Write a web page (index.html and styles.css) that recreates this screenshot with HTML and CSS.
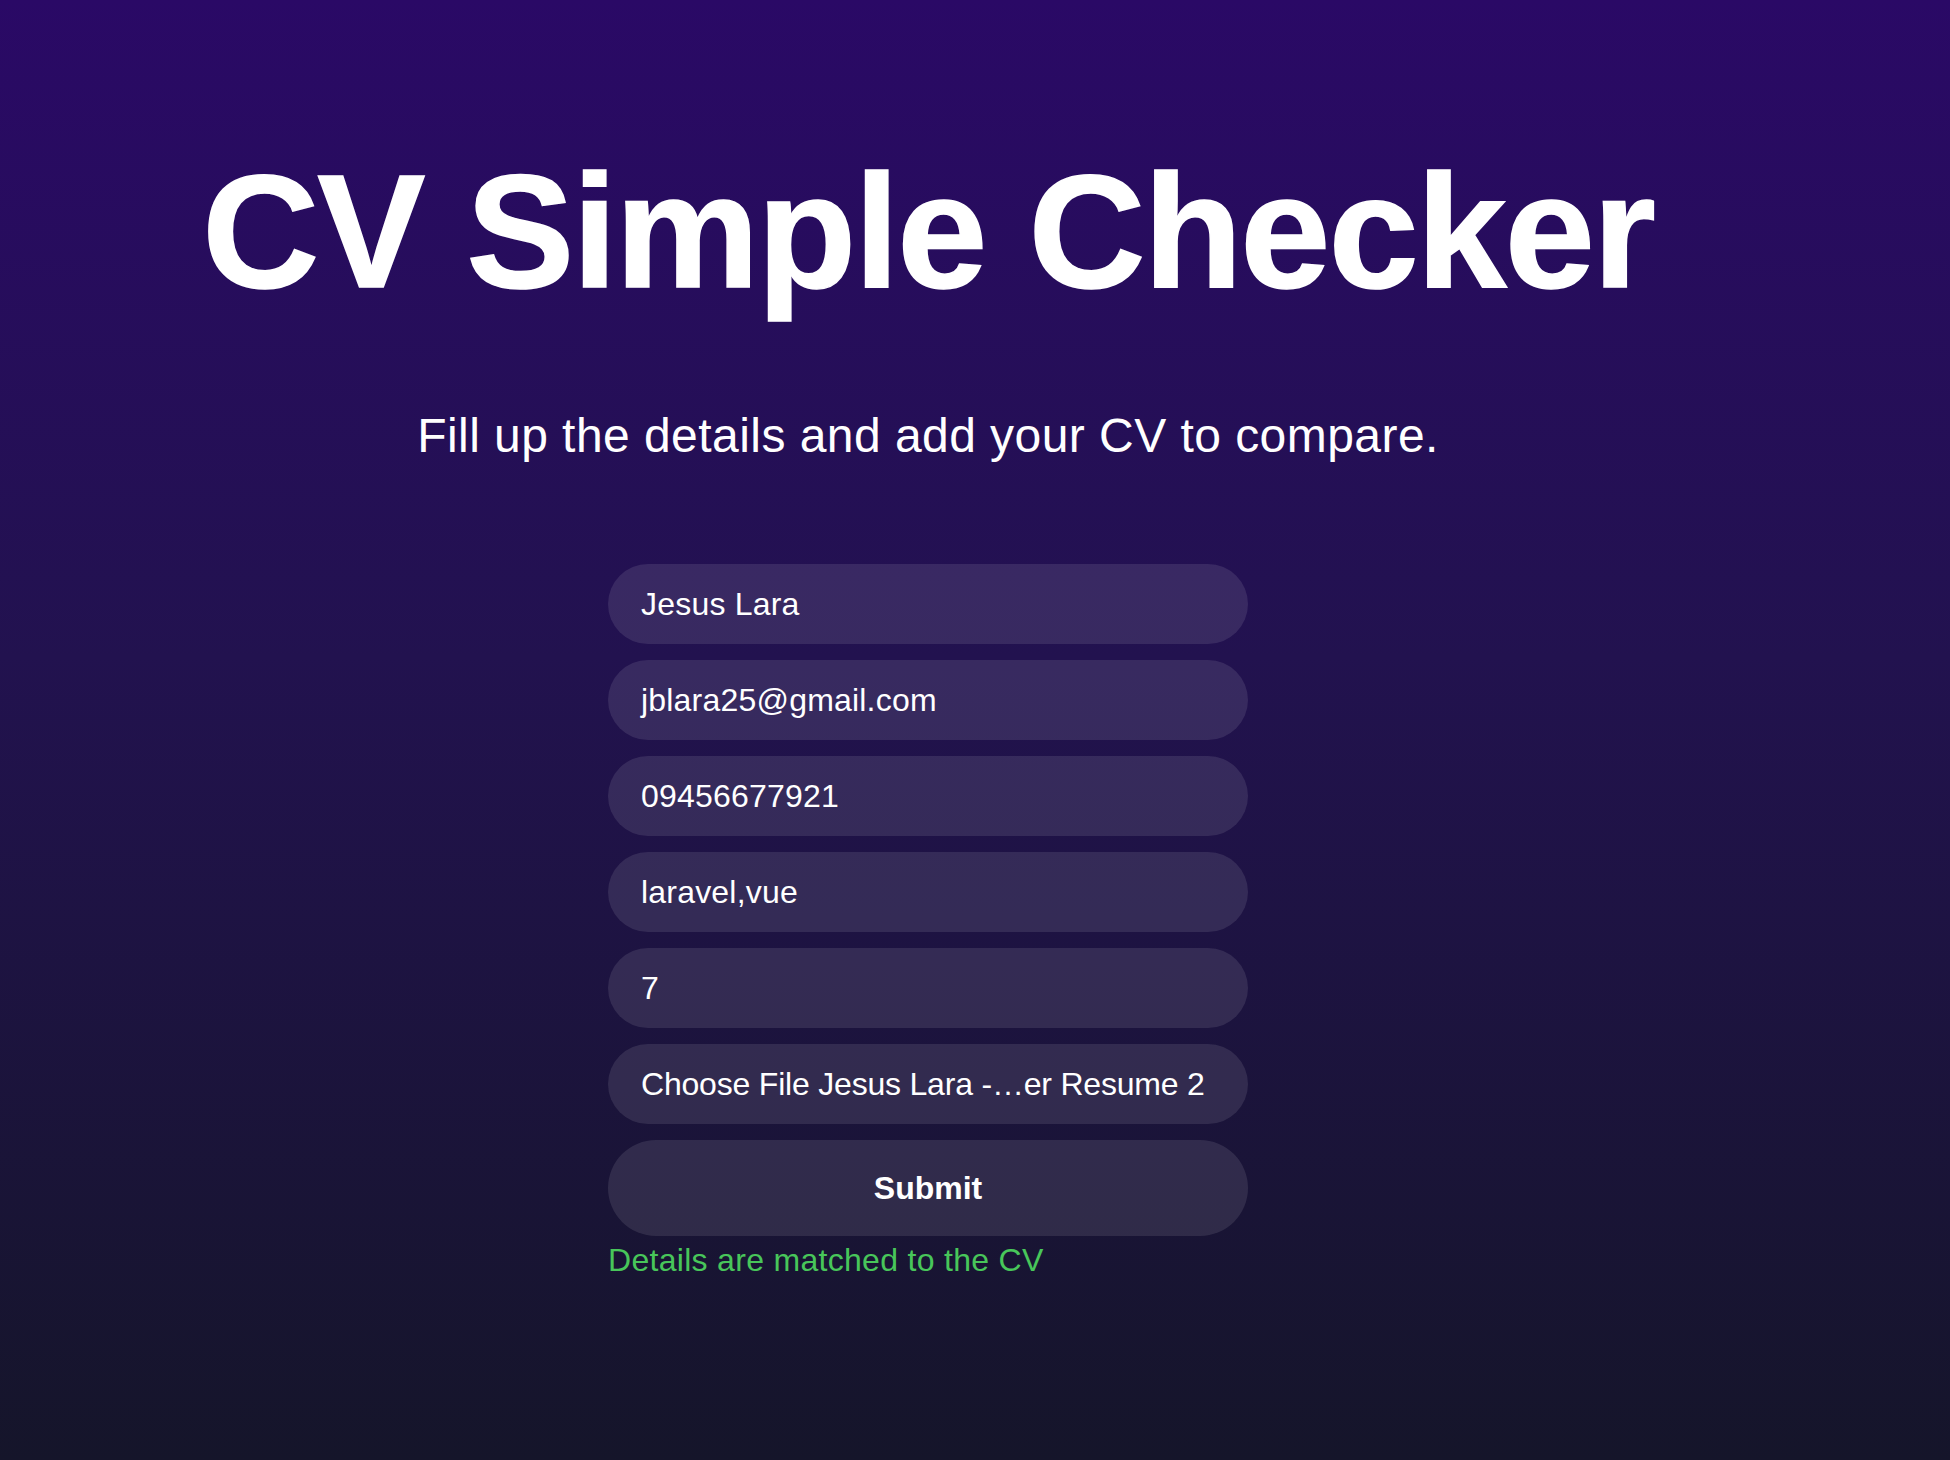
FILE: index.html
```html
<!DOCTYPE html>
<html lang="en">
<head>
<meta charset="utf-8">
<title>CV Simple Checker</title>
<link rel="stylesheet" href="styles.css">
</head>
<body>
<main class="page">
  <h1 class="title">CV Simple Checker</h1>
  <p class="subtitle">Fill up the details and add your CV to compare.</p>
  <form class="form">
    <div class="field">Jesus Lara</div>
    <div class="field">jblara25@gmail.com</div>
    <div class="field">09456677921</div>
    <div class="field">laravel,vue</div>
    <div class="field">7</div>
    <div class="field field-file">Choose File Jesus Lara -…er Resume 2</div>
    <button type="button" class="submit">Submit</button>
    <p class="message">Details are matched to the CV</p>
  </form>
</main>
</body>
</html>
```
FILE: styles.css
```css
html, body {
  margin: 0;
  padding: 0;
}
body {
  min-height: 1460px;
  background: linear-gradient(180deg, #2a0966 0%, #22124f 45%, #15152a 100%);
  font-family: "Liberation Sans", Arial, sans-serif;
  color: #ffffff;
}
.page {
  width: 1856px;
  display: flex;
  flex-direction: column;
  align-items: center;
  padding-top: 150px;
  box-sizing: border-box;
}
.title {
  margin: 0;
  font-size: 162px;
  line-height: 1;
  font-weight: 700;
  letter-spacing: -2px;
  white-space: nowrap;
  -webkit-text-stroke: 1.5px #ffffff;
}
.subtitle {
  margin: 100px 0 0;
  font-size: 48px;
  line-height: 1;
  letter-spacing: 0.45px;
}
.form {
  margin-top: 104px;
  width: 640px;
  display: flex;
  flex-direction: column;
  gap: 16px;
}
.field {
  height: 80px;
  border-radius: 40px;
  background: rgba(255, 255, 255, 0.1);
  padding: 0 33px;
  display: flex;
  align-items: center;
  font-size: 32px;
  letter-spacing: 0.2px;
  white-space: nowrap;
  overflow: hidden;
}
.field-file {
  letter-spacing: -0.2px;
}
.submit {
  height: 96px;
  border: none;
  border-radius: 48px;
  background: rgba(255, 255, 255, 0.1);
  color: #ffffff;
  font-family: "Liberation Sans", Arial, sans-serif;
  font-size: 32px;
  font-weight: 700;
  padding: 0;
}
.message {
  margin: -10px 0 0 0;
  font-size: 32px;
  line-height: 1.15;
  letter-spacing: 0.3px;
  color: #48c65a;
}
```
